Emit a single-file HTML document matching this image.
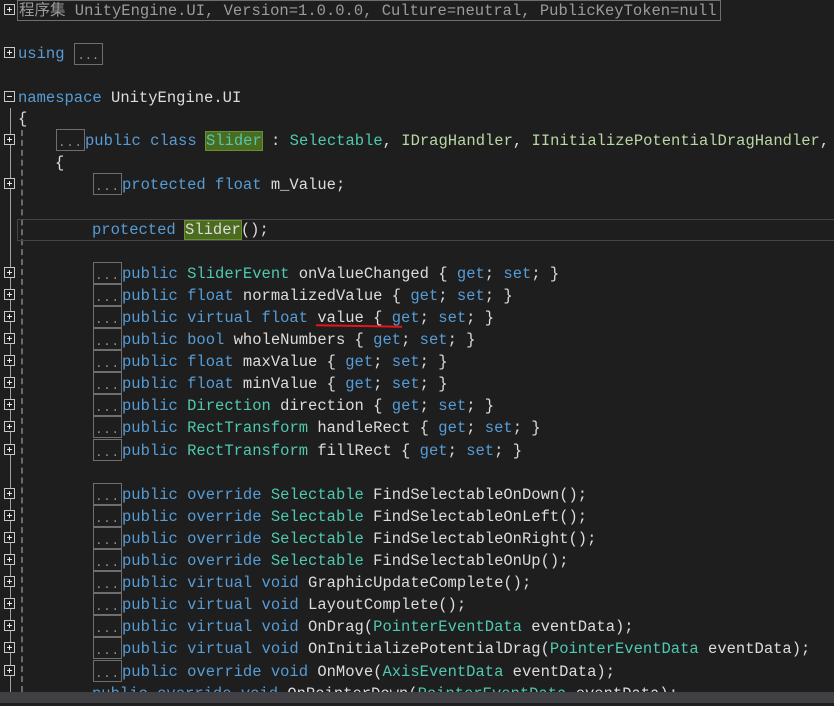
<!DOCTYPE html>
<html><head><meta charset="utf-8"><style>
body{margin:0;background:#1e1e1e;width:834px;height:703px;overflow:hidden;position:relative;font-family:"Liberation Mono","Noto Sans CJK SC",monospace;font-size:15.5px;color:#dcdcdc}
.l{position:absolute;height:22px;line-height:24px;white-space:pre}
.k{color:#569cd6}.t{color:#4ec9b0}.i{color:#b8d7a3}.g{color:#9b9b9b}
.d{position:absolute;width:27px;height:20px;border:1px solid #6e6e6e;color:#9b9b9b;line-height:26px;font-size:12px;letter-spacing:1px;text-align:center}
.p{position:absolute;left:4px;width:9px;height:9px;border:1px solid #c8c8c8;background:#1e1e1e}
.p:before{content:"";position:absolute;left:2px;top:4px;width:5px;height:1px;background:#e8e8e8}
.p.pl:after{content:"";position:absolute;left:4px;top:2px;width:1px;height:5px;background:#e8e8e8}
.hl{background:#4b6b1e;outline:1px solid #6a8e32}
</style></head><body>
<div style="position:absolute;left:10px;top:108px;width:1px;height:584px;background:#a0a0a0"></div>
<div style="position:absolute;left:21px;top:130px;width:0;height:562px;border-left:2px dashed #6a6a6a"></div>
<div style="position:absolute;left:17px;top:219px;width:820px;height:20px;border:1px solid #464646"></div>
<div style="position:absolute;left:17px;top:0;width:702px;height:19px;border:1px solid #6e6e6e"></div>

<div class="p pl" style="top:4px"></div>
<div class="l g" style="left:19px;top:-1px">程序集 UnityEngine.UI, Version=1.0.0.0, Culture=neutral, PublicKeyToken=null</div>
<div class="p pl" style="top:47px"></div>
<div class="l k" style="left:18px;top:42px">using <span style="display:inline-block;width:27px;height:20px;border:1px solid #6e6e6e;vertical-align:middle;line-height:24px;font-size:12px;color:#9b9b9b;text-align:center">...</span></div>
<div class="p" style="top:91px"></div>
<div class="l" style="left:18px;top:86px"><span class="k">namespace</span> UnityEngine.UI</div>
<div class="l" style="left:18px;top:107px">{</div>
<div class="p pl" style="top:134px"></div>
<div class="d" style="left:56px;top:129px">...</div>
<div class="l" style="left:85px;top:129px"><span class="k">public class</span> <span class="t hl">Slider</span> : <span class="t">Selectable</span>, <span class="i">IDragHandler</span>, <span class="i">IInitializePotentialDragHandler</span>,</div>
<div class="l" style="left:55px;top:151px">{</div>
<div class="p pl" style="top:178px"></div>
<div class="d" style="left:93px;top:173px">...</div>
<div class="l" style="left:122px;top:173px"><span class="k">protected float</span> m_Value;</div>
<div class="l" style="left:92px;top:218px"><span class="k">protected</span> <span class="hl">Slider</span>();</div>

<div id="m"></div>
<div style="position:absolute;left:316px;top:325px;width:86px;height:2px;background:#e8141b;transform:rotate(1deg)"></div>
<div style="position:absolute;left:0;top:692px;width:834px;height:11px;background:#3f3f44"></div>
<script>
var rows=[
[273,'<span class="k">public</span> <span class="t">SliderEvent</span> onValueChanged { <span class="k">get</span>; <span class="k">set</span>; }'],
[295,'<span class="k">public float</span> normalizedValue { <span class="k">get</span>; <span class="k">set</span>; }'],
[317,'<span class="k">public virtual float</span> value { <span class="k">get</span>; <span class="k">set</span>; }'],
[339,'<span class="k">public bool</span> wholeNumbers { <span class="k">get</span>; <span class="k">set</span>; }'],
[361,'<span class="k">public float</span> maxValue { <span class="k">get</span>; <span class="k">set</span>; }'],
[383,'<span class="k">public float</span> minValue { <span class="k">get</span>; <span class="k">set</span>; }'],
[405,'<span class="k">public</span> <span class="t">Direction</span> direction { <span class="k">get</span>; <span class="k">set</span>; }'],
[427,'<span class="k">public</span> <span class="t">RectTransform</span> handleRect { <span class="k">get</span>; <span class="k">set</span>; }'],
[450,'<span class="k">public</span> <span class="t">RectTransform</span> fillRect { <span class="k">get</span>; <span class="k">set</span>; }'],
[494,'<span class="k">public override</span> <span class="t">Selectable</span> FindSelectableOnDown();'],
[516,'<span class="k">public override</span> <span class="t">Selectable</span> FindSelectableOnLeft();'],
[538,'<span class="k">public override</span> <span class="t">Selectable</span> FindSelectableOnRight();'],
[560,'<span class="k">public override</span> <span class="t">Selectable</span> FindSelectableOnUp();'],
[582,'<span class="k">public virtual void</span> GraphicUpdateComplete();'],
[604,'<span class="k">public virtual void</span> LayoutComplete();'],
[626,'<span class="k">public virtual void</span> OnDrag(<span class="t">PointerEventData</span> eventData);'],
[648,'<span class="k">public virtual void</span> OnInitializePotentialDrag(<span class="t">PointerEventData</span> eventData);'],
[671,'<span class="k">public override void</span> OnMove(<span class="t">AxisEventData</span> eventData);']];
var h='';
rows.forEach(function(r){var c=r[0];
h+='<div class="p pl" style="top:'+(c-6)+'px"></div><div class="d" style="left:93px;top:'+(c-11)+'px">...</div><div class="l" style="left:122px;top:'+(c-11)+'px">'+r[1]+'</div>';});
h+='<div class="l" style="left:92px;top:682px"><span class="k">public override void</span> OnPointerDown(<span class="t">PointerEventData</span> eventData);</div>';
document.getElementById('m').innerHTML=h;
</script>
</body></html>
